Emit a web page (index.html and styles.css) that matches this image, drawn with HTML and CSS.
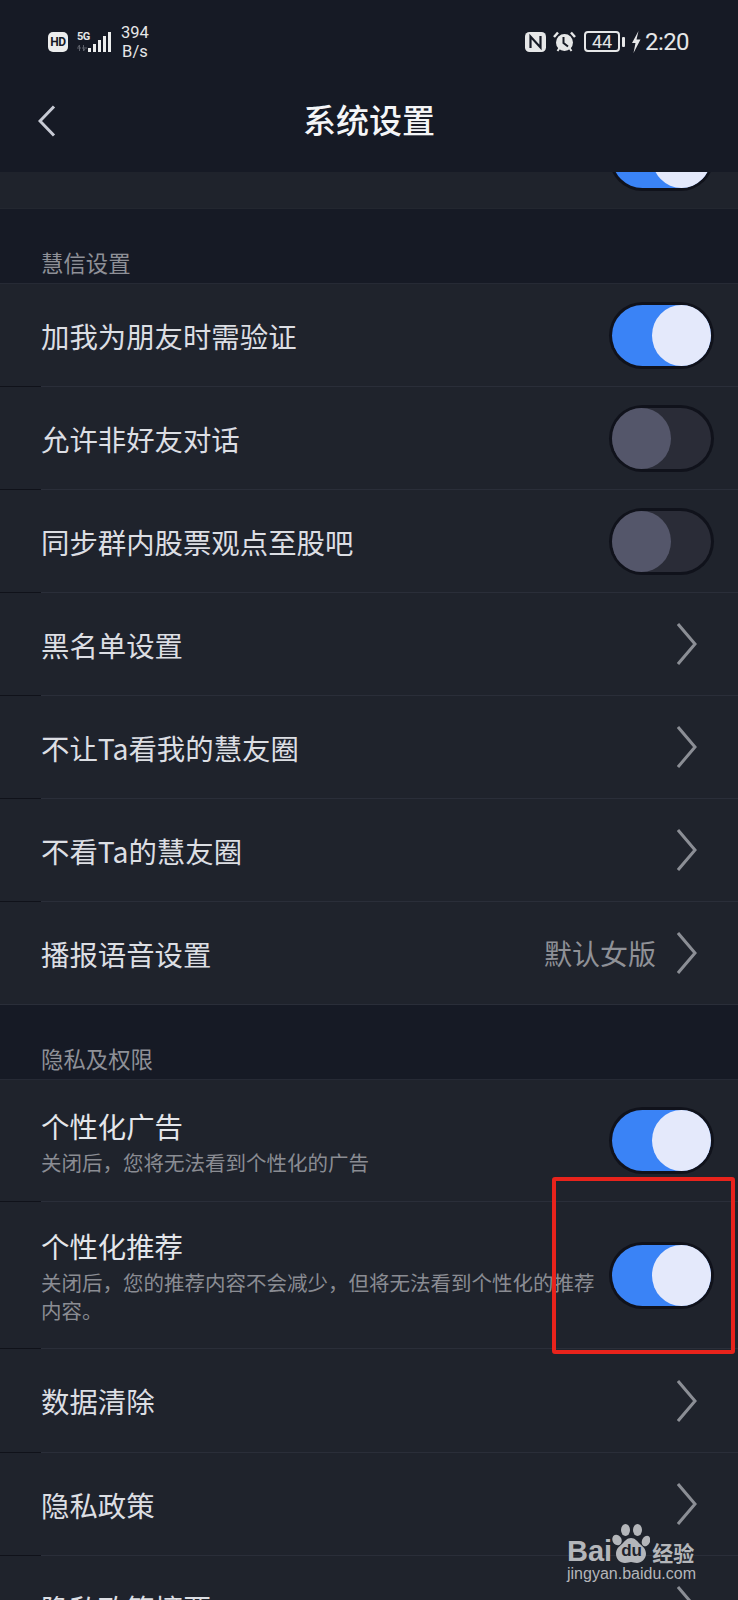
FILE: index.html
```html
<!DOCTYPE html>
<html lang="zh-CN">

<head>
    <meta charset="UTF-8">
    <meta name="viewport" content="width=device-width, initial-scale=1.0">
    <title>系统设置</title>
    <link rel="stylesheet" href="styles.css">
</head>

<body>
    <div class="status-bar">
        <div class="status-left">
            <span class="hd-badge">HD</span>
            <div class="net-type">
                <span class="net-label">5G</span>
                <svg class="net-arrows" width="10" height="6" viewBox="0 0 10 6">
                    <path d="M2.5 0v6M1 2l1.5-2M6.500 0v6M8 4L6.500 6M5 3h5M0 3h4" stroke="#5d606a" stroke-width="1" fill="none" />
                </svg>
            </div>
            <svg class="signal" width="23" height="20" viewBox="0 0 23 20">
                <rect x="0" y="16" width="3" height="4" fill="#eceded" />
                <rect x="5" y="12" width="3" height="8" fill="#eceded" />
                <rect x="10" y="8" width="3" height="12" fill="#eceded" />
                <rect x="15" y="4" width="3" height="16" fill="#eceded" />
                <rect x="20" y="0" width="3" height="20" fill="#eceded" />
            </svg>
            <div class="speed"><span>394</span><span>B/s</span></div>
        </div>
        <div class="status-right">
            <svg width="21" height="20" viewBox="0 0 21 20">
                <rect width="21" height="20" rx="4.500" fill="#e6e7e8" />
                <path d="M5.500 16V4.500l10 11V4" stroke="#161a25" stroke-width="2.200" fill="none" />
            </svg>
            <svg class="alarm" width="23" height="21" viewBox="0 0 23 21">
                <circle cx="11.500" cy="11.500" r="8.500" fill="#e6e7e8" />
                <path d="M1 6l4-4.500M22 6l-4-4.500" stroke="#e6e7e8" stroke-width="2.500" fill="none" />
                <path d="M4.500 20l2-3M18.500 20l-2-3" stroke="#e6e7e8" stroke-width="2" fill="none" />
                <path d="M10.500 6v6l4.500 3.500" stroke="#161a25" stroke-width="2" fill="none" />
            </svg>
            <div class="battery"><span>44</span></div>
            <span class="battery-nub"></span>
            <svg class="bolt" width="10" height="22" viewBox="0 0 10 22">
                <path d="M7.500 0L1 12h3.500L2.500 22 9.500 8.500H5.500z" fill="#e6e7e8" />
            </svg>
            <span class="clock">2:20</span>
        </div>
    </div>

    <div class="nav-bar">
        <svg class="nav-back" width="18" height="32" viewBox="0 0 18 32">
            <path d="M16 1.500L2 16l14 14.500" stroke="#c7cad4" stroke-width="3" fill="none" />
        </svg>
        <h1 class="nav-title">系统设置</h1>
    </div>

    <div class="content">
        <div class="group group-scrolled">
            <div class="row">
                <span class="row-title"></span>
                <span class="toggle on"></span>
            </div>
        </div>

        <div class="section-head">慧信设置</div>
        <div class="group">
            <div class="row">
                <span class="row-title">加我为朋友时需验证</span>
                <span class="toggle on"></span>
            </div>
            <div class="sep"></div>
            <div class="row">
                <span class="row-title">允许非好友对话</span>
                <span class="toggle"></span>
            </div>
            <div class="sep"></div>
            <div class="row">
                <span class="row-title">同步群内股票观点至股吧</span>
                <span class="toggle"></span>
            </div>
            <div class="sep"></div>
            <div class="row">
                <span class="row-title">黑名单设置</span>
                <svg class="chevron" width="20" height="42" viewBox="0 0 20 42"><path d="M1 1l17 20L1 41" /></svg>
            </div>
            <div class="sep"></div>
            <div class="row">
                <span class="row-title">不让Ta看我的慧友圈</span>
                <svg class="chevron" width="20" height="42" viewBox="0 0 20 42"><path d="M1 1l17 20L1 41" /></svg>
            </div>
            <div class="sep"></div>
            <div class="row">
                <span class="row-title">不看Ta的慧友圈</span>
                <svg class="chevron" width="20" height="42" viewBox="0 0 20 42"><path d="M1 1l17 20L1 41" /></svg>
            </div>
            <div class="sep"></div>
            <div class="row">
                <span class="row-title">播报语音设置</span>
                <span class="row-value">默认女版</span>
                <svg class="chevron" width="20" height="42" viewBox="0 0 20 42"><path d="M1 1l17 20L1 41" /></svg>
            </div>
        </div>

        <div class="section-head">隐私及权限</div>
        <div class="group">
            <div class="row row-auto row-ad">
                <div class="row-text">
                    <div class="row-title">个性化广告</div>
                    <div class="row-sub">关闭后，您将无法看到个性化的广告</div>
                </div>
                <span class="toggle on"></span>
            </div>
            <div class="sep"></div>
            <div class="row row-auto row-rec">
                <div class="row-text">
                    <div class="row-title">个性化推荐</div>
                    <div class="row-sub">关闭后，您的推荐内容不会减少，但将无法看到个性化的推荐内容。</div>
                </div>
                <span class="toggle on"></span>
            </div>
            <div class="sep"></div>
            <div class="row row-data">
                <span class="row-title">数据清除</span>
                <svg class="chevron" width="20" height="42" viewBox="0 0 20 42"><path d="M1 1l17 20L1 41" /></svg>
            </div>
            <div class="sep"></div>
            <div class="row">
                <span class="row-title">隐私政策</span>
                <svg class="chevron" width="20" height="42" viewBox="0 0 20 42"><path d="M1 1l17 20L1 41" /></svg>
            </div>
            <div class="sep"></div>
            <div class="row">
                <span class="row-title">隐私政策摘要</span>
                <svg class="chevron" width="20" height="42" viewBox="0 0 20 42"><path d="M1 1l17 20L1 41" /></svg>
            </div>
        </div>
    </div>

    <!-- annotation and watermark sit over the screenshot -->
    <div class="red-box"></div>

    <div class="watermark">
        <div class="wm-top">
            <span class="wm-bai">Bai</span>
            <span class="wm-paw">
                <svg width="38" height="40" viewBox="0 0 38 40">
                    <ellipse cx="5" cy="16" rx="4.500" ry="5.500" transform="rotate(-25 5 16)" />
                    <ellipse cx="13.500" cy="6" rx="4.500" ry="6" />
                    <ellipse cx="25.500" cy="6" rx="4.500" ry="6" />
                    <ellipse cx="34" cy="17" rx="4" ry="5.500" transform="rotate(25 34 17)" />
                    <path d="M19 14c4 0 6 3 9 6 3 2.500 6 5 6 10 0 5-5 9-9 9-3 0-4-1-6-1s-3 1-6 1c-5 0-9-4-9-9 0-5 3-7.500 6-10 3-3 5-6 9-6z" />
                </svg>
                <span class="wm-du">du</span>
            </span>
            <span class="wm-jy">经验</span>
        </div>
        <div class="wm-url">jingyan.baidu.com</div>
    </div>
</body>

</html>
```

FILE: styles.css
```css
html,
body {
    height: 1600px;
    overflow: hidden;
}

body {
    position: relative;
    margin: 0;
    background-color: #161a25;
    color: #dcdee3;
    font-family: "Noto Sans CJK SC", "Noto Sans", sans-serif;
}

/* status bar */
.status-bar {
    height: 70px;
    padding: 13px 49px 0 48px;
    display: flex;
    align-items: center;
    justify-content: space-between;
    box-sizing: border-box;
    color: #e6e7e8;
    font-family: Roboto, sans-serif;
}

.status-left,
.status-right {
    display: flex;
    align-items: center;
}

.hd-badge {
    width: 20px;
    height: 20px;
    background-color: #eceded;
    border-radius: 5px;
    color: #161a25;
    font-size: 12px;
    font-weight: 700;
    line-height: 20px;
    text-align: center;
    letter-spacing: -0.5px;
}

.net-type {
    margin-left: 9px;
    width: 11px;
    display: flex;
    flex-direction: column;
    align-items: flex-start;
    gap: 3px;
}

.net-label {
    font-size: 11px;
    font-weight: 700;
    line-height: 10px;
    letter-spacing: -0.5px;
}

.net-arrows {
    display: block;
}

.speed {
    margin-left: 10px;
    display: flex;
    flex-direction: column;
    align-items: center;
    font-size: 16.500px;
    line-height: 19px;
}

.alarm {
    margin-left: 7px;
}

.battery {
    margin-left: 8px;
    width: 36px;
    height: 21px;
    box-sizing: border-box;
    border: 2px solid #e6e7e8;
    border-radius: 4px;
    font-size: 18px;
    line-height: 17px;
    text-align: center;
}

.battery-nub {
    margin-left: 2px;
    width: 3px;
    height: 10px;
    background-color: #e6e7e8;
    border-radius: 1px;
}

.bolt {
    margin-left: 6px;
}

.clock {
    margin-left: 4px;
    font-size: 24px;
    letter-spacing: -0.600px;
}

/* title bar */
.nav-bar {
    position: relative;
    height: 102px;
    padding-bottom: 4px;
    box-sizing: border-box;
    display: flex;
    align-items: center;
    justify-content: center;
}

.nav-back {
    position: absolute;
    left: 38px;
    top: 35px;
}

.nav-title {
    margin: 0;
    color: #f4f5f7;
    font-size: 33px;
    font-weight: 500;
}

/* list */
.content {
    height: 1428px;
    overflow: hidden;
}

.group {
    background-color: #1f232c;
    border-bottom: 1px solid #2a2e39;
}

.group-scrolled {
    margin-top: -66px;
    border-bottom-color: #232730;
}

.section-head {
    height: 75px;
    box-sizing: border-box;
    padding: 0 0 5px 41px;
    display: flex;
    align-items: flex-end;
    border-bottom: 1px solid #262a35;
    color: #8e9097;
    font-size: 22.400px;
    line-height: 32px;
}

.row {
    height: 102px;
    padding: 0 24px 0 41px;
    box-sizing: border-box;
    display: flex;
    align-items: center;
}

.row-auto {
    height: auto;
}

.row-ad {
    height: 121px;
}

.row-rec {
    height: 146px;
}

.row-data {
    height: 103px;
}

.row-text {
    flex: 1;
    max-width: 560px;
}

.row > .row-title {
    flex: 1;
    padding-top: 1px;
}

.row-title {
    color: #dcdee3;
    font-size: 28.400px;
    line-height: 40px;
}

.row-auto .row-title {
    color: #e4e6ea;
}

.row-sub {
    margin-top: 2px;
    color: #8a8c93;
    font-size: 20.500px;
    line-height: 28px;
}

.row-value {
    margin-right: 21px;
    color: #8f9197;
    font-size: 28px;
    line-height: 40px;
}

.row-auto .toggle {
    margin-left: auto;
}

.chevron {
    margin-right: 17px;
    fill: none;
    stroke: #8b8e95;
    stroke-width: 3px;
}

.sep {
    height: 1px;
    background: linear-gradient(to right, #10121a 41px, #2a2e39 41px);
}

/* switches */
.toggle {
    position: relative;
    flex: none;
    width: 99px;
    height: 61px;
    margin-right: 3px;
    background-color: #2a2c37;
    border-radius: 31px;
    box-shadow: 0 0 0 3px #10121b;
}

.toggle::after {
    content: "";
    position: absolute;
    left: 0;
    top: 0;
    width: 59px;
    height: 61px;
    background-color: #54566a;
    border-radius: 50%;
}

.toggle.on {
    background-color: #3a83f6;
}

.toggle.on::after {
    left: 40px;
    background-color: #e4e9fb;
}

/* overlays */
.red-box {
    position: absolute;
    left: 552px;
    top: 1177px;
    width: 183px;
    height: 177px;
    box-sizing: border-box;
    border: 4px solid #e8231c;
    border-radius: 3px;
}

.watermark {
    position: absolute;
    left: 567px;
    top: 1524px;
    width: 132px;
    color: #b4b6ba;
}

.wm-top {
    height: 40px;
    display: flex;
    align-items: flex-end;
}

.wm-bai {
    font-family: "Liberation Sans", sans-serif;
    font-size: 29px;
    font-weight: 700;
    line-height: 26px;
}

.wm-paw {
    position: relative;
    width: 38px;
    height: 40px;
}

.wm-paw svg {
    display: block;
    fill: #b4b6ba;
}

.wm-du {
    position: absolute;
    left: 9px;
    top: 17px;
    color: #1f232c;
    font-family: "Liberation Sans", sans-serif;
    font-size: 17px;
    font-weight: 700;
    line-height: 20px;
}

.wm-jy {
    margin-left: 2px;
    font-size: 21px;
    font-weight: 700;
    line-height: 24px;
    white-space: nowrap;
}

.wm-url {
    font-family: "Liberation Sans", sans-serif;
    font-size: 16px;
    line-height: 20px;
    white-space: nowrap;
}
```
